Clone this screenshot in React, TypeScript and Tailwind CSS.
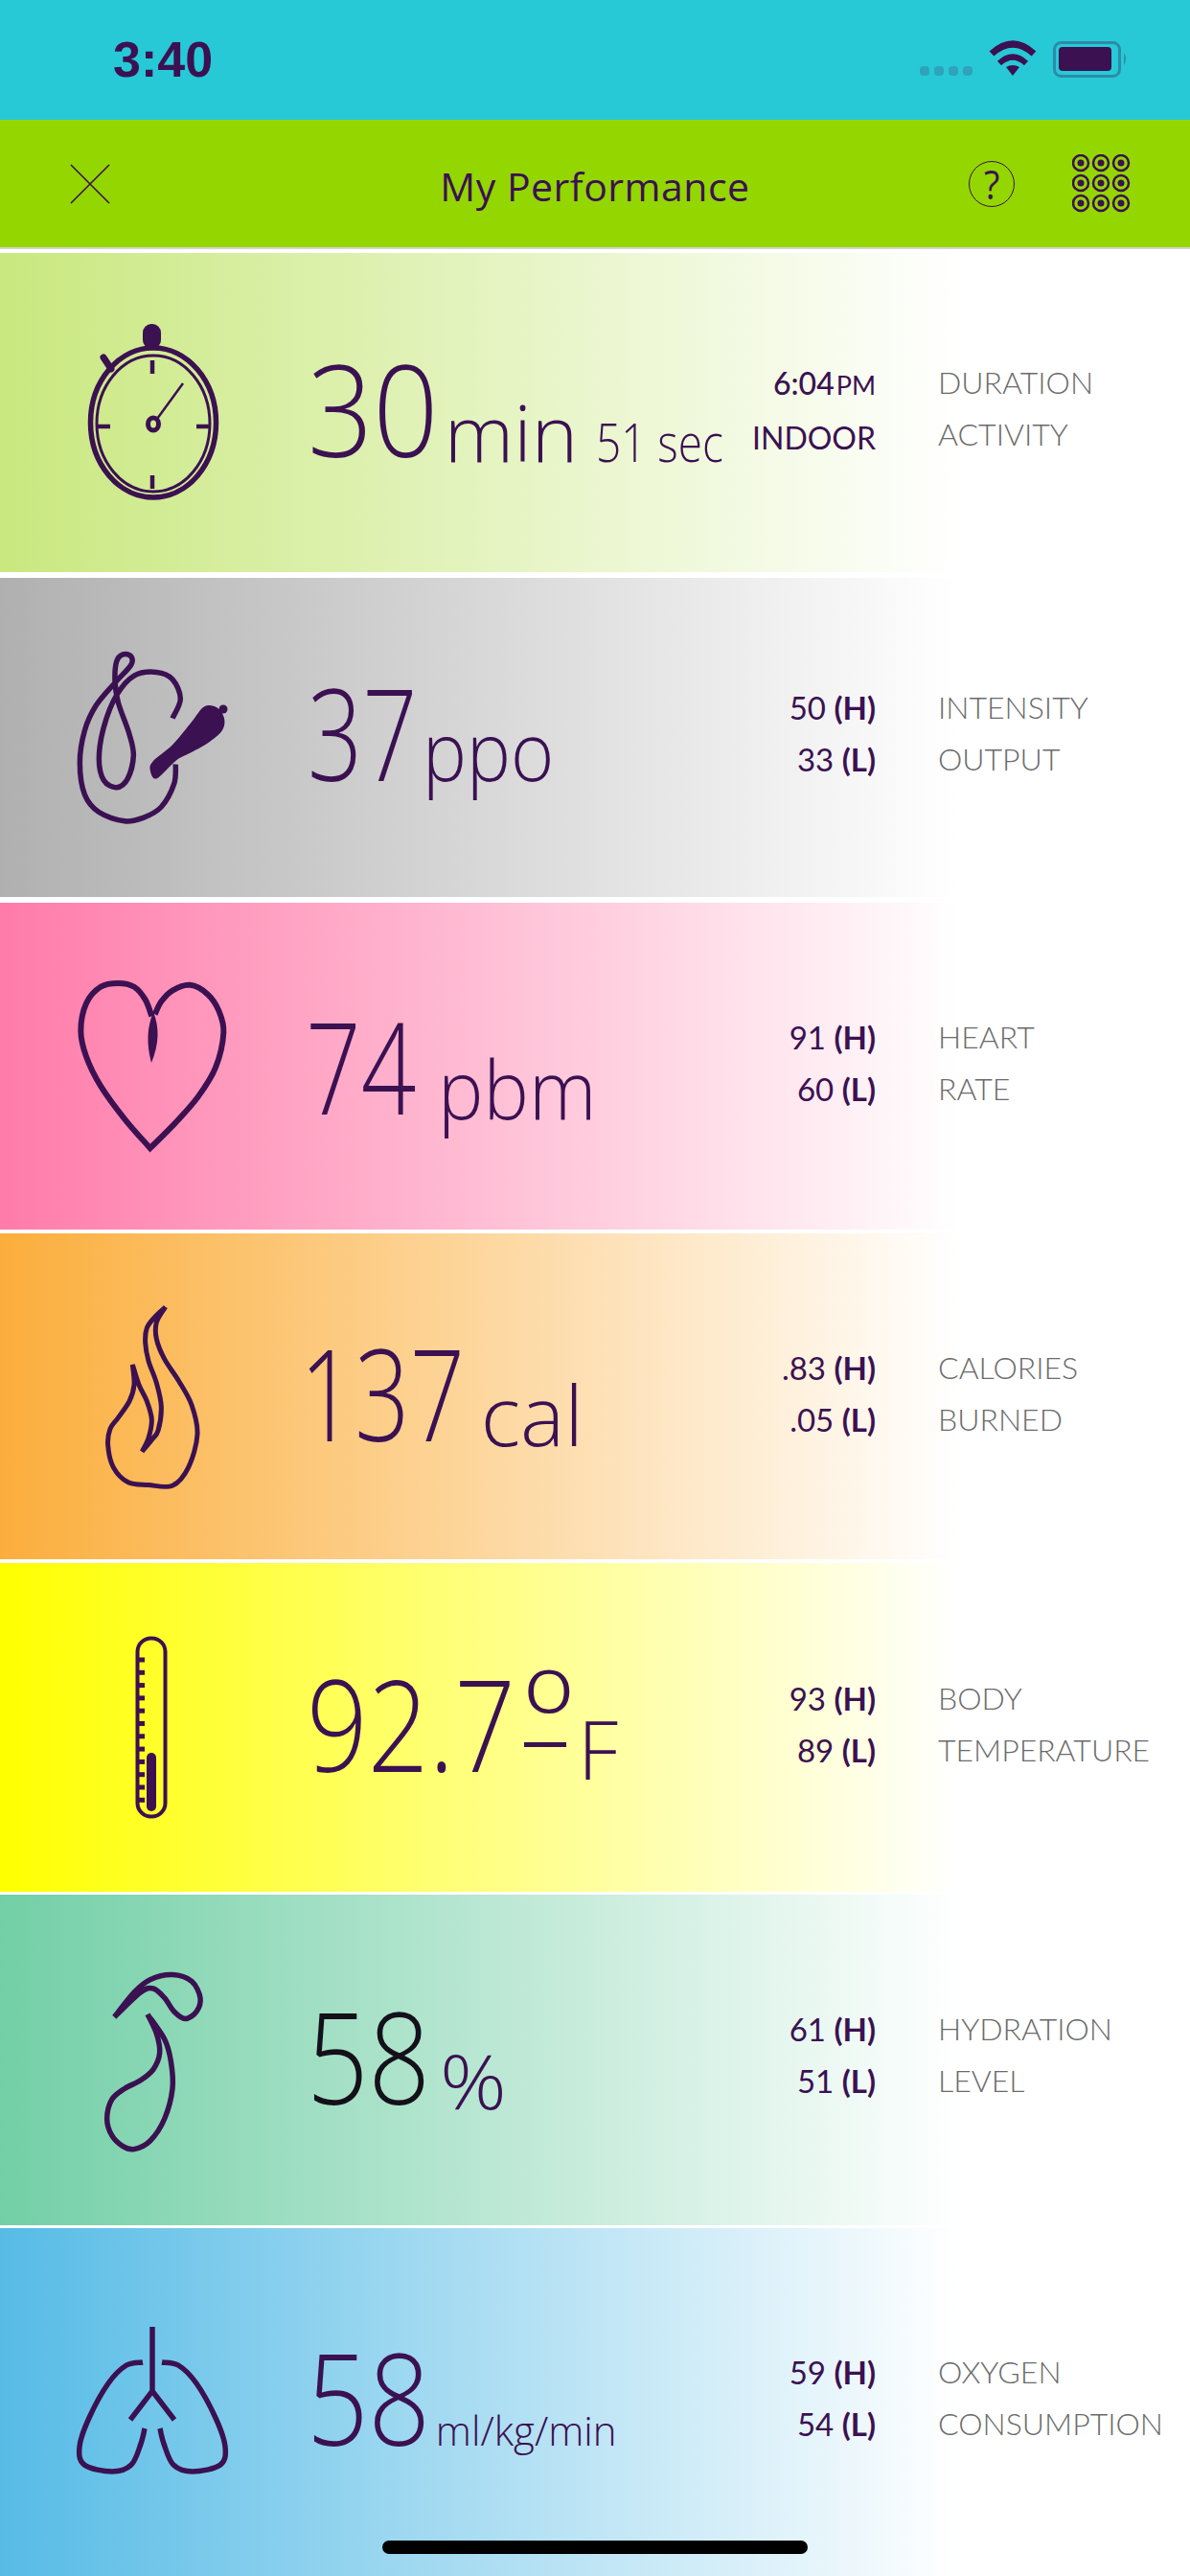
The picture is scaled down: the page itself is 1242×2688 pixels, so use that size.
import React from "react";

const P = "#3b1152";
type Pt = [number, number];

// Smooth curve through measured points (Catmull-Rom to cubic Bezier)
function sm(p: Pt[], move = true, closed = false): string {
  let d = move ? `M${p[0][0]} ${p[0][1]}` : "";
  const n = p.length;
  const at = (i: number): Pt => (closed ? p[(i + n) % n] : p[Math.max(0, Math.min(n - 1, i))]);
  const last = closed ? n : n - 1;
  for (let i = 0; i < last; i++) {
    const a = at(i - 1), b = at(i), c = at(i + 1), e = at(i + 2);
    d += `C${b[0] + (c[0] - a[0]) / 6} ${b[1] + (c[1] - a[1]) / 6} ${c[0] - (e[0] - b[0]) / 6} ${c[1] - (e[1] - b[1]) / 6} ${c[0]} ${c[1]}`;
  }
  return d + (closed ? "Z" : "");
}
const m1 = (p: Pt[]) => p.map(([x, y]) => [40 + x / 3, 300 + y / 2.703] as Pt);
const m2 = (p: Pt[]) => p.map(([x, y]) => [40 + x / 3, 980 + y / 2.613] as Pt);
const m3 = (p: Pt[]) => p.map(([x, y]) => [40 + x / 3, 1680 + y / 1.742] as Pt);

function Stopwatch() {
  return (
    <g fill="none" stroke={P}>
      <rect x="149" y="338" width="19" height="26" rx="9" fill={P} stroke="none" />
      <path d="M108 373L116 385" strokeWidth="7" strokeLinecap="round" />
      <ellipse cx="160" cy="441" rx="65.5" ry="78" strokeWidth="5.5" />
      <ellipse cx="160" cy="442" rx="59" ry="71" strokeWidth="3" />
      <path d="M159 376V390M159 496V510M102 445H115M205 445H218" strokeWidth="4.5" />
      <ellipse cx="160" cy="442.5" rx="5.5" ry="6.5" strokeWidth="5" />
      <path d="M164 437L191 400" strokeWidth="2.5" />
    </g>
  );
}

function Rope() {
  const pts = m1([[430, 1345], [425, 1400], [385, 1465], [330, 1495], [270, 1505], [190, 1480], [145, 1430], [130, 1340], [145, 1250], [180, 1180], [240, 1115], [290, 1065], [290, 1040], [265, 1035], [245, 1055], [240, 1110], [250, 1170], [285, 1260], [298, 1320], [280, 1385], [245, 1410], [205, 1390], [190, 1330], [205, 1240], [245, 1150], [300, 1095], [370, 1085], [420, 1105], [445, 1160], [420, 1215]]);
  const handle = m1([[350, 1360], [370, 1385], [430, 1335], [470, 1315], [530, 1285], [575, 1250], [582, 1215], [560, 1185], [520, 1182], [480, 1225], [420, 1290], [360, 1335]]);
  return (
    <g>
      <path d={sm(pts)} fill="none" stroke={P} strokeWidth="5.5" />
      <path d={sm(handle, true, true)} fill={P} />
      <circle cx="233" cy="740" r="4.5" fill={P} />
    </g>
  );
}

function Heart() {
  const l = m2([[355, 210], [335, 165], [300, 130], [250, 120], [195, 130], [150, 175], [133, 250], [150, 320], [195, 400], [270, 490], [350, 570]]);
  const r = m2([[350, 570], [430, 500], [500, 430], [555, 350], [580, 255], [565, 195], [530, 150], [475, 125], [420, 140], [385, 170], [365, 205]]);
  return (
    <g>
      <path d={sm(l) + sm(r, false)} fill="none" stroke={P} strokeWidth="6" strokeMiterlimit="6" />
      <path d="M160 1056Q150 1080 158 1109Q170 1080 160 1056Z" fill={P} />
    </g>
  );
}

function Flame() {
  const a = m2([[398, 1003], [365, 1030], [340, 1060], [335, 1100], [345, 1150], [370, 1210], [385, 1275], [375, 1340], [355, 1365], [325, 1397]]);
  const b = m2([[325, 1397], [345, 1360], [355, 1310], [340, 1260], [315, 1215], [295, 1160]]);
  const c = m2([[295, 1160], [300, 1215], [285, 1260], [250, 1305], [225, 1335], [218, 1380], [235, 1440], [280, 1480], [345, 1488], [420, 1490], [470, 1440], [498, 1350], [480, 1270], [440, 1205], [395, 1145], [370, 1090], [370, 1045], [398, 1003]]);
  return <path d={sm(a) + sm(b, false) + sm(c, false)} fill="none" stroke={P} strokeWidth="5" strokeMiterlimit="8" />;
}

function Thermometer() {
  const ticks: number[] = [];
  for (let i = 0; i < 12; i++) ticks.push(1732 + i * 13.3);
  return (
    <g>
      <rect x="143.5" y="1709.5" width="29" height="186" rx="14" fill="none" stroke={P} strokeWidth="4" />
      <rect x="153" y="1829" width="10" height="61" rx="5" fill={P} />
      {ticks.map((y) => (
        <rect key={y} x="142" y={y - 2.5} width="9" height="5" fill={P} />
      ))}
    </g>
  );
}

function Drop() {
  const top = m3([[238, 740], [300, 695], [350, 672], [420, 663], [480, 675], [507, 705], [495, 730], [460, 743], [425, 730], [395, 705], [360, 688], [320, 695], [238, 740]]);
  const bot = m3([[342, 735], [370, 770], [380, 805], [360, 835], [320, 855], [270, 870], [230, 890], [215, 925], [230, 955], [265, 975], [300, 980], [350, 965], [395, 925], [420, 870], [415, 820], [395, 780], [342, 735]]);
  return (
    <g fill="none" stroke={P} strokeWidth="5.5" strokeMiterlimit="10">
      <path d={sm(top)} />
      <path d={sm(bot)} />
    </g>
  );
}

function Lungs() {
  const l: Pt[] = [[149, 2465], [132, 2468], [113, 2487], [93, 2523], [83, 2553], [88, 2572], [117, 2579], [137, 2572], [147, 2550], [151, 2534]];
  const r = l.map(([x, y]) => [318 - x, y] as Pt);
  return (
    <g fill="none" stroke={P} strokeWidth="5.5">
      <path d={sm(l)} />
      <path d={sm(r)} />
      <path d="M159 2428V2495M136 2525L159 2495L182 2525" />
    </g>
  );
}

type RowProps = {
  box: string;
  viewBox: string;
  bg: string;
  icon: React.ReactNode;
  valueClass: string;
  value: React.ReactNode;
  statsClass: string;
  s1: React.ReactNode;
  s2: React.ReactNode;
  l1: string;
  l2: string;
};

function Row({ box, viewBox, bg, icon, valueClass, value, statsClass, s1, s2, l1, l2 }: RowProps) {
  return (
    <div className={`flex w-full ${box} ${bg}`}>
      <div className="w-[300px] shrink-0 pl-[40px]">
        <svg viewBox={viewBox} className="block w-[260px] h-full">
          {icon}
        </svg>
      </div>
      <div className={`w-[454px] shrink-0 ${valueClass}`}>
        <div className="flex items-baseline whitespace-nowrap font-light leading-none">{value}</div>
      </div>
      <div className={`w-[160px] shrink-0 ${statsClass}`}>
        <div className="font-['Lato',sans-serif] text-right text-[33px] leading-[54px] whitespace-nowrap text-[#3b1152]">
          <div>{s1}</div>
          <div>{s2}</div>
        </div>
      </div>
      <div className={`ml-[64px] w-[264px] shrink-0 ${statsClass}`}>
        <div className="font-['Lato',sans-serif] pl-[1px] text-[32px] leading-[54px] font-light whitespace-nowrap text-[#6b6b6b]">
          <div>{l1}</div>
          <div>{l2}</div>
        </div>
      </div>
    </div>
  );
}

const HL = ({ v, k }: { v: string; k: string }) => (
  <>
    {v} <b className="font-bold">({k})</b>
  </>
);

export default function App() {
  return (
    <div className="relative w-[1242px] h-[2688px] overflow-hidden bg-white font-['Open_Sans',sans-serif] text-[#3b1152]">
      <div className="flex h-[125px] items-start justify-between bg-[#27c9d6]">
        <div className="pl-[118px] pt-[31px] font-['Liberation_Sans',sans-serif] text-[52px] leading-[62px] font-bold">3:40</div>
        <svg viewBox="955 30 240 60" className="w-[240px] h-[60px] mt-[30px] mr-[47px]">
          <g fill="#2ea3bb">
            <rect x="960" y="69" width="10" height="10" rx="4" />
            <rect x="975" y="69" width="10" height="10" rx="4" />
            <rect x="990" y="69" width="10" height="10" rx="4" />
            <rect x="1005" y="69" width="10" height="10" rx="4" />
          </g>
          <path d="M1035 56Q1057 36 1079 56" fill="none" stroke={P} strokeWidth="7" />
          <path d="M1043 66Q1057 53 1071 66" fill="none" stroke={P} strokeWidth="6" />
          <path d="M1050 70Q1057 66 1064 70L1057 79Z" fill={P} />
          <rect x="1100.5" y="44.5" width="68" height="35" rx="7" fill="none" stroke="#2b8ca8" strokeWidth="3" />
          <rect x="1105" y="49" width="55" height="25" rx="4" fill={P} />
          <path d="M1173 55Q1177 61 1173 68Z" fill="#2b8ca8" />
        </svg>
      </div>

      <div className="relative flex h-[133px] items-center justify-between bg-[#94d600]">
        <svg viewBox="0 0 42 42" className="ml-[73px] w-[42px] h-[42px]">
          <path d="M1 1L41 41M41 1L1 41" stroke={P} strokeWidth="1.6" fill="none" />
        </svg>
        <div className="absolute inset-0 flex items-center justify-center pt-[6px]">
          <div className="text-[41px] leading-none tracking-[0.5px]">My Performance</div>
        </div>
        <div className="flex items-center mr-[62px]">
          <div className="flex h-[48px] w-[48px] items-center justify-center rounded-full border-[1.5px] border-[#3b1152] text-[42px] font-medium leading-none">
            <span className="scale-x-[0.9]">?</span>
          </div>
          <svg viewBox="1119 162 61 61" className="ml-[60px] w-[61px] h-[61px]">
            {[171, 192, 213].map((y) =>
              [1128, 1149, 1170].map((x) => (
                <g key={`${x}-${y}`}>
                  <ellipse cx={x} cy={y} rx="8" ry="8" fill="none" stroke={P} strokeWidth="2.5" />
                  <circle cx={x} cy={y} r="3.5" fill={P} />
                </g>
              ))
            )}
          </svg>
        </div>
      </div>
      <div className="h-[6px] bg-white border-t-2 border-[#d4d4d4]" />

      <Row
        box="h-[333px]"
        viewBox="40 264 260 333"
        bg="bg-[linear-gradient(90deg,#c9e87f_0px,#ffffff_1000px)]"
        icon={<Stopwatch />}
        valueClass="pl-[21px] pt-[95px]"
        value={
          <>
            <span className="inline-block origin-left scale-x-[0.9] mr-[-15px] text-[133px]">30</span>
            <span className="ml-[6px] text-[82px] relative top-[5px]">min</span>
            <span className="ml-[19px] inline-block origin-left scale-x-[0.82] text-[56px] relative top-[5px]">51 sec</span>
          </>
        }
        statsClass="pt-[108px]"
        s1={<span className="text-[32px] font-medium">6:04<span className="ml-[2px] text-[27px] font-normal">PM</span></span>}
        s2={<span className="text-[32px] font-normal">INDOOR</span>}
        l1="DURATION"
        l2="ACTIVITY"
      />
      <div className="h-[6px]" />
      <Row
        box="h-[333px]"
        viewBox="40 603 260 333"
        bg="bg-[linear-gradient(90deg,#b0b0b0_0px,#ffffff_1000px)]"
        icon={<Rope />}
        valueClass="pl-[21px] pt-[94px]"
        value={
          <>
            <span className="inline-block origin-left scale-x-[0.755] mr-[-37px] text-[133px]">37</span>
            <span className="ml-[5px] inline-block origin-left scale-x-[0.92] text-[84px]">ppo</span>
          </>
        }
        statsClass="pt-[108px]"
        s1={<HL v="50" k="H" />}
        s2={<HL v="33" k="L" />}
        l1="INTENSITY"
        l2="OUTPUT"
      />
      <div className="h-[6px]" />
      <Row
        box="h-[341px]"
        viewBox="40 942 260 341"
        bg="bg-[linear-gradient(90deg,#ff7ba9_0px,#ffffff_1000px)]"
        icon={<Heart />}
        valueClass="pl-[19px] pt-[103px]"
        value={
          <>
            <span className="inline-block origin-left scale-x-[0.76] mr-[-37px] text-[133px]">74</span>
            <span className="ml-[23px] inline-block origin-left scale-x-[0.95] text-[84px] relative top-[5px]">pbm</span>
          </>
        }
        statsClass="pt-[113px]"
        s1={<HL v="91" k="H" />}
        s2={<HL v="60" k="L" />}
        l1="HEART"
        l2="RATE"
      />
      <div className="h-[4px]" />
      <Row
        box="h-[340px]"
        viewBox="40 1287 260 340"
        bg="bg-[linear-gradient(90deg,#fbae3c_0px,#ffffff_1000px)]"
        icon={<Flame />}
        valueClass="pl-[13px] pt-[99px]"
        value={
          <>
            <span className="inline-block origin-left scale-x-[0.755] mr-[-56px] text-[133px]">137</span>
            <span className="ml-[17px] text-[87px] relative top-[5px]">cal</span>
          </>
        }
        statsClass="pt-[113px]"
        s1={<HL v=".83" k="H" />}
        s2={<HL v=".05" k="L" />}
        l1="CALORIES"
        l2="BURNED"
      />
      <div className="h-[4px]" />
      <Row
        box="h-[343px]"
        viewBox="40 1631 260 343"
        bg="bg-[linear-gradient(90deg,#ffff00_0px,#ffffff_1000px)]"
        icon={<Thermometer />}
        valueClass="pl-[20px] pt-[85px]"
        value={
          <>
            <span className="inline-block origin-left scale-x-[0.84] mr-[-42px] text-[133px]">92.7</span>
            <span className="relative ml-[5px] font-['Lato',sans-serif] text-[150px]">
              º
              <span className="absolute left-[5px] bottom-[43px] h-[5px] w-[44px] bg-[#3b1152]" />
            </span>
            <span className="text-[84px] relative top-[8px]">F</span>
          </>
        }
        statsClass="pt-[114px]"
        s1={<HL v="93" k="H" />}
        s2={<HL v="89" k="L" />}
        l1="BODY"
        l2="TEMPERATURE"
      />
      <div className="h-[3px]" />
      <Row
        box="h-[345px]"
        viewBox="40 1977 260 345"
        bg="bg-[linear-gradient(90deg,#72cfa6_0px,#ffffff_1000px)]"
        icon={<Drop />}
        valueClass="pl-[20px] pt-[101px]"
        value={
          <>
            <span className="inline-block origin-left scale-x-[0.85] mr-[-23px] text-[133px] text-[#14101a]">58</span>
            <span className="ml-[10px] inline-block origin-left scale-x-[1.08] text-[80px] relative top-[5px]">%</span>
          </>
        }
        statsClass="pt-[113px]"
        s1={<HL v="61" k="H" />}
        s2={<HL v="51" k="L" />}
        l1="HYDRATION"
        l2="LEVEL"
      />
      <div className="h-[3px]" />
      <Row
        box="h-[363px]"
        viewBox="40 2325 260 363"
        bg="bg-[linear-gradient(90deg,#56bbe6_0px,#ffffff_1000px)]"
        icon={<Lungs />}
        valueClass="pl-[20px] pt-[109px]"
        value={
          <>
            <span className="inline-block origin-left scale-x-[0.85] mr-[-23px] text-[133px]">58</span>
            <span className="ml-[6px] text-[42px]">ml/kg/min</span>
          </>
        }
        statsClass="pt-[123px]"
        s1={<HL v="59" k="H" />}
        s2={<HL v="54" k="L" />}
        l1="OXYGEN"
        l2="CONSUMPTION"
      />

      <div className="absolute bottom-[23px] left-[399px] h-[14px] w-[444px] rounded-full bg-black" />
    </div>
  );
}
